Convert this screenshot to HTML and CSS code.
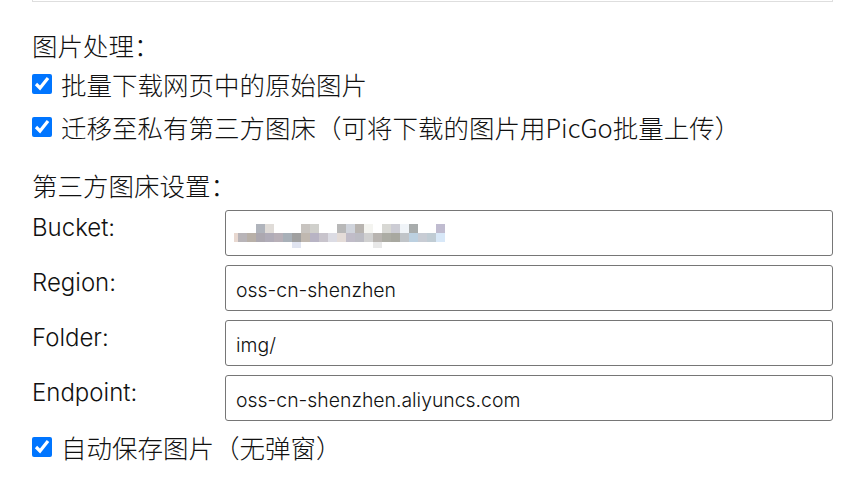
FILE: index.html
```html
<!DOCTYPE html>
<html lang="zh-CN">
<head>
<meta charset="utf-8">
<title>设置</title>
<link rel="stylesheet" href="styles.css">
</head>
<body>
<div class="panel">
  <div class="prev-box"></div>

  <div class="section-title">图片处理：</div>
  <label class="check-row">
    <input type="checkbox" class="check" checked>
    <span class="check-text">批量下载网页中的原始图片</span>
  </label>
  <label class="check-row">
    <input type="checkbox" class="check" checked>
    <span class="check-text">迁移至私有第三方图床（可将下载的图片用PicGo批量上传）</span>
  </label>

  <div class="section-title second">第三方图床设置：</div>
  <div class="settings">
    <div class="label">Bucket:</div>
    <div class="field">
      <div class="mosaic">
        <div class="mosaic-row top"></div>
        <div class="mosaic-row mid"></div>
        <div class="mosaic-row bot"></div>
      </div>
    </div>

    <div class="label">Region:</div>
    <input class="field input" type="text" value="oss-cn-shenzhen">

    <div class="label">Folder:</div>
    <input class="field input" type="text" value="img/">

    <div class="label">Endpoint:</div>
    <input class="field input" type="text" value="oss-cn-shenzhen.aliyuncs.com">
  </div>

  <label class="check-row last">
    <input type="checkbox" class="check" checked>
    <span class="check-text">自动保存图片（无弹窗）</span>
  </label>
</div>
</body>
</html>
```
FILE: styles.css
```css
html, body {
  margin: 0;
  padding: 0;
  background: #ffffff;
}

body {
  font-family: "Noto Sans CJK SC", "Noto Sans", sans-serif;
  font-weight: 300;
  color: #111111;
}

.panel {
  width: 801px;
  margin-left: 32px;
}

.prev-box {
  height: 1px;
  border: 1px solid #dedede;
  border-top: 0;
}

.section-title {
  margin-top: 26px;
  font-size: 25.5px;
  line-height: 34px;
  color: #111111;
}

.section-title.second {
  margin-top: 20px;
}

.check-row {
  display: flex;
  align-items: center;
  gap: 9px;
  height: 43px;
  font-size: 25.5px;
}

.check-row.last {
  margin-top: 4px;
}

.check {
  width: 20px;
  height: 20px;
  margin: 0;
  flex: none;
  accent-color: #0075ff;
}

.check-text {
  line-height: 34px;
  white-space: nowrap;
}

.settings {
  display: grid;
  grid-template-columns: 193px 1fr;
  row-gap: 9px;
  margin-top: 8px;
}

.label {
  font-family: "Inter", "Noto Sans", sans-serif;
  font-weight: 350;
  font-size: 24px;
  line-height: 36px;
  color: #111111;
}

.field {
  box-sizing: border-box;
  height: 46px;
  width: 100%;
  border: 1px solid #767676;
  border-radius: 3px;
  background: #ffffff;
  margin: 0;
}

.input {
  padding: 3px 10px 0;
  font-family: "Inter", "Noto Sans", sans-serif;
  font-weight: 350;
  font-size: 19.4px;
  color: #111111;
  outline: none;
}

.mosaic {
  padding: 13px 0 0 8px;
}

.mosaic-row {
  width: 211px;
}

.mosaic-row.top {
  height: 9px;
  background: linear-gradient(to right,
    transparent 0 22px,
    #b0b4bc 22px 31px, #e0dcd8 31px 40px,
    transparent 40px 67px,
    #c8c4c0 67px 76px, #d0d0cc 76px 85px,
    transparent 85px 103px,
    #b8b8b8 103px 112px, #d0d4dc 112px 121px, #b8b4b0 121px 130px, #f4f4f0 130px 139px,
    transparent 139px 148px,
    #d8d8d4 148px 157px, #ccccd4 157px 166px, #f0f4f8 166px 175px, #a8acac 175px 184px,
    transparent 184px 202px,
    #c0bcd0 202px 211px);
}

.mosaic-row.mid {
  height: 9px;
  background: linear-gradient(to right,
    #e8d8d0 0 4px,
    #b8b4b8 4px 13px, #b8b0a8 13px 22px, #aca8b0 22px 31px, #b0acb8 31px 40px,
    #b8b0b8 40px 49px, #a8b0b8 49px 58px, #a0a0a0 58px 67px, #c0b8b0 67px 76px,
    #b8b4c4 76px 85px, #c8c4cc 85px 94px, #dcdce4 94px 103px, #e4dcd8 103px 112px,
    #c0bcc8 112px 121px, #bcbcc4 121px 130px, #d0d0d0 130px 139px, #b8b4b0 139px 148px,
    #acaca4 148px 157px, #a8a8a0 157px 166px, #c0c4c8 166px 175px, #bcd0e0 175px 184px,
    #c8ccd4 184px 193px, #c0ccd4 193px 202px, #d8e8f8 202px 211px);
}

.mosaic-row.bot {
  height: 6px;
  background: linear-gradient(to right,
    transparent 0 58px,
    #e0e4f0 58px 67px,
    transparent 67px 139px,
    #e8e8e8 139px 148px,
    transparent 148px 211px);
}
```
